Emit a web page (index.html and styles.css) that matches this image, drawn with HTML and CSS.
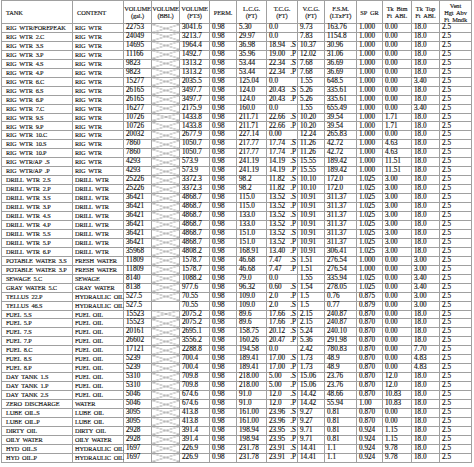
FILE: index.html
```html
<!DOCTYPE html>
<html>
<head>
<meta charset="utf-8">
<link rel="stylesheet" href="styles.css">
</head>
<body>
<table class="grid">
<colgroup>
<col class="c-tank"><col class="c-content"><col class="c-gal"><col class="c-bbl"><col class="c-ft3"><col class="c-perm"><col class="c-lcg"><col class="c-tcg"><col class="c-vcg"><col class="c-fsm"><col class="c-sg"><col class="c-btm"><col class="c-top"><col class="c-vent">
</colgroup>
<thead>
<tr>
<th class="l">TANK</th><th class="l">CONTENT</th><th>VOLUME<br>(gal.)</th><th>VOLUME<br>(BBL)</th><th>VOLUME<br>(FT3)</th><th>PERM.</th><th>L.C.G.<br>(FT)</th><th>T.C.G.<br>(FT)</th><th>V.C.G.<br>(FT)</th><th>F.S.M.<br>(LTxFT)</th><th>SP GR</th><th>Tk Btm<br>Ft ABL</th><th>Tk Top<br>Ft ABL</th><th>Vent<br>Hgt Abv<br>Ft Mndk</th>
</tr>
</thead>
<tbody>
<tr><td>RIG WTR/FOREPEAK</td><td>RIG WTR</td><td>22753</td><td class="x"></td><td>3041.6</td><td>0.98</td><td>5.30</td><td>0.0</td><td>9.73</td><td>163.76</td><td>1.000</td><td>0.00</td><td>18.0</td><td>2.5</td></tr>
<tr><td>RIG WTR 2.C</td><td>RIG WTR</td><td>24049</td><td class="x"></td><td>3213.7</td><td>0.98</td><td>29.97</td><td>0.0</td><td>7.83</td><td>1154.8</td><td>1.000</td><td>0.00</td><td>18.0</td><td>2.5</td></tr>
<tr><td>RIG WTR 3.S</td><td>RIG WTR</td><td>14695</td><td class="x"></td><td>1964.4</td><td>0.98</td><td>36.98</td><td>18.94<span class="sd">.S</span></td><td>10.37</td><td>30.96</td><td>1.000</td><td>0.00</td><td>18.0</td><td>2.5</td></tr>
<tr><td>RIG WTR 3.P</td><td>RIG WTR</td><td>11166</td><td class="x"></td><td>1492.7</td><td>0.98</td><td>35.96</td><td>19.00<span class="sd">.P</span></td><td>12.02</td><td>31.06</td><td>1.000</td><td>0.00</td><td>18.0</td><td>2.5</td></tr>
<tr><td>RIG WTR 4.S</td><td>RIG WTR</td><td>9823</td><td class="x"></td><td>1313.2</td><td>0.98</td><td>53.44</td><td>22.34<span class="sd">.S</span></td><td>7.68</td><td>36.69</td><td>1.000</td><td>0.00</td><td>18.0</td><td>2.5</td></tr>
<tr><td>RIG WTR 4.P</td><td>RIG WTR</td><td>9823</td><td class="x"></td><td>1313.2</td><td>0.98</td><td>53.44</td><td>22.34<span class="sd">.P</span></td><td>7.68</td><td>36.69</td><td>1.000</td><td>0.00</td><td>18.0</td><td>2.5</td></tr>
<tr><td>RIG WTR 6.C</td><td>RIG WTR</td><td>15277</td><td class="x"></td><td>2035.5</td><td>0.98</td><td>125.04</td><td>0.0</td><td>1.55</td><td>648.5</td><td>1.000</td><td>0.00</td><td>3.40</td><td>2.5</td></tr>
<tr><td>RIG WTR 6.S</td><td>RIG WTR</td><td>26165</td><td class="x"></td><td>3497.7</td><td>0.98</td><td>124.0</td><td>20.43<span class="sd">.S</span></td><td>5.26</td><td>335.61</td><td>1.000</td><td>0.00</td><td>18.0</td><td>2.5</td></tr>
<tr><td>RIG WTR 6.P</td><td>RIG WTR</td><td>26165</td><td class="x"></td><td>3497.7</td><td>0.98</td><td>124.0</td><td>20.43<span class="sd">.P</span></td><td>5.26</td><td>335.61</td><td>1.000</td><td>0.00</td><td>18.0</td><td>2.5</td></tr>
<tr><td>RIG WTR 7.C</td><td>RIG WTR</td><td>16277</td><td class="x"></td><td>2175.9</td><td>0.98</td><td>160.0</td><td>0.0</td><td>1.55</td><td>655.49</td><td>1.000</td><td>0.00</td><td>3.40</td><td>2.5</td></tr>
<tr><td>RIG WTR 9.S</td><td>RIG WTR</td><td>10726</td><td class="x"></td><td>1433.8</td><td>0.98</td><td>211.71</td><td>22.66<span class="sd">.S</span></td><td>10.20</td><td>39.54</td><td>1.000</td><td>1.71</td><td>18.0</td><td>2.5</td></tr>
<tr><td>RIG WTR 9.P</td><td>RIG WTR</td><td>10726</td><td class="x"></td><td>1433.8</td><td>0.98</td><td>211.71</td><td>22.66<span class="sd">.P</span></td><td>10.20</td><td>39.54</td><td>1.000</td><td>1.71</td><td>18.0</td><td>2.5</td></tr>
<tr><td>RIG WTR 10.C</td><td>RIG WTR</td><td>20032</td><td class="x"></td><td>2677.9</td><td>0.98</td><td>227.14</td><td>0.00</td><td>12.24</td><td>265.83</td><td>1.000</td><td>0.00</td><td>18.0</td><td>2.5</td></tr>
<tr><td>RIG WTR 10.S</td><td>RIG WTR</td><td>7860</td><td class="x"></td><td>1050.7</td><td>0.98</td><td>217.77</td><td>17.74<span class="sd">.S</span></td><td>11.26</td><td>42.72</td><td>1.000</td><td>4.63</td><td>18.0</td><td>2.5</td></tr>
<tr><td>RIG WTR 10.P</td><td>RIG WTR</td><td>7860</td><td class="x"></td><td>1050.7</td><td>0.98</td><td>217.77</td><td>17.74<span class="sd">.P</span></td><td>11.26</td><td>42.72</td><td>1.000</td><td>4.63</td><td>18.0</td><td>2.5</td></tr>
<tr><td>RIG WTR/AP .S</td><td>RIG WTR</td><td>4293</td><td class="x"></td><td>573.9</td><td>0.98</td><td>241.19</td><td>14.19<span class="sd">.S</span></td><td>15.55</td><td>189.42</td><td>1.000</td><td>11.51</td><td>18.0</td><td>2.5</td></tr>
<tr><td>RIG WTR/AP .P</td><td>RIG WTR</td><td>4293</td><td class="x"></td><td>573.9</td><td>0.98</td><td>241.19</td><td>14.19<span class="sd">.P</span></td><td>15.55</td><td>189.42</td><td>1.000</td><td>11.51</td><td>18.0</td><td>2.5</td></tr>
<tr><td>DRILL WTR 2.S</td><td>DRILL WTR</td><td>25226</td><td class="x"></td><td>3372.3</td><td>0.98</td><td>98.2</td><td>11.82<span class="sd">.S</span></td><td>10.10</td><td>172.0</td><td>1.025</td><td>3.00</td><td>18.0</td><td>2.5</td></tr>
<tr><td>DRILL WTR 2.P</td><td>DRILL WTR</td><td>25226</td><td class="x"></td><td>3372.3</td><td>0.98</td><td>98.2</td><td>11.82<span class="sd">.P</span></td><td>10.10</td><td>172.0</td><td>1.025</td><td>3.00</td><td>18.0</td><td>2.5</td></tr>
<tr><td>DRILL WTR 3.S</td><td>DRILL WTR</td><td>36421</td><td class="x"></td><td>4868.7</td><td>0.98</td><td>115.0</td><td>13.52<span class="sd">.S</span></td><td>10.91</td><td>311.37</td><td>1.025</td><td>3.00</td><td>18.0</td><td>2.5</td></tr>
<tr><td>DRILL WTR 3.P</td><td>DRILL WTR</td><td>36421</td><td class="x"></td><td>4868.7</td><td>0.98</td><td>115.0</td><td>13.52<span class="sd">.P</span></td><td>10.91</td><td>311.37</td><td>1.025</td><td>3.00</td><td>18.0</td><td>2.5</td></tr>
<tr><td>DRILL WTR 4.S</td><td>DRILL WTR</td><td>36421</td><td class="x"></td><td>4868.7</td><td>0.98</td><td>133.0</td><td>13.52<span class="sd">.S</span></td><td>10.91</td><td>311.37</td><td>1.025</td><td>3.00</td><td>18.0</td><td>2.5</td></tr>
<tr><td>DRILL WTR 4.P</td><td>DRILL WTR</td><td>36421</td><td class="x"></td><td>4868.7</td><td>0.98</td><td>133.0</td><td>13.52<span class="sd">.P</span></td><td>10.91</td><td>311.37</td><td>1.025</td><td>3.00</td><td>18.0</td><td>2.5</td></tr>
<tr><td>DRILL WTR 5.S</td><td>DRILL WTR</td><td>36421</td><td class="x"></td><td>4868.7</td><td>0.98</td><td>151.0</td><td>13.52<span class="sd">.S</span></td><td>10.91</td><td>311.37</td><td>1.025</td><td>3.00</td><td>18.0</td><td>2.5</td></tr>
<tr><td>DRILL WTR 5.P</td><td>DRILL WTR</td><td>36421</td><td class="x"></td><td>4868.7</td><td>0.98</td><td>151.0</td><td>13.52<span class="sd">.P</span></td><td>10.91</td><td>311.37</td><td>1.025</td><td>3.00</td><td>18.0</td><td>2.5</td></tr>
<tr><td>DRILL WTR 6.P</td><td>DRILL WTR</td><td>35968</td><td class="x"></td><td>4808.2</td><td>0.98</td><td>168.91</td><td>13.40<span class="sd">.P</span></td><td>10.91</td><td>306.41</td><td>1.025</td><td>3.00</td><td>18.0</td><td>2.5</td></tr>
<tr><td>POTABLE WATER 3.S</td><td>FRESH WATER</td><td>11809</td><td class="x"></td><td>1578.7</td><td>0.98</td><td>46.68</td><td>7.47<span class="sd">.S</span></td><td>1.51</td><td>276.54</td><td>1.000</td><td>0.00</td><td>3.00</td><td>2.5</td></tr>
<tr><td>POTABLE WATER 3.P</td><td>FRESH WATER</td><td>11809</td><td class="x"></td><td>1578.7</td><td>0.98</td><td>46.68</td><td>7.47<span class="sd">.P</span></td><td>1.51</td><td>276.54</td><td>1.000</td><td>0.00</td><td>3.00</td><td>2.5</td></tr>
<tr><td>SEWAGE 5.C</td><td>SEWAGE</td><td>8140</td><td class="x"></td><td>1088.2</td><td>0.98</td><td>79.0</td><td>0.0</td><td>1.55</td><td>335.94</td><td>1.025</td><td>0.00</td><td>3.40</td><td>2.5</td></tr>
<tr><td>GRAY WATER 5.C</td><td>GRAY WATER</td><td>8138</td><td class="x"></td><td>977.6</td><td>0.98</td><td>96.32</td><td>0.60<span class="sd">.S</span></td><td>1.54</td><td>278.05</td><td>1.025</td><td>0.00</td><td>3.40</td><td>2.5</td></tr>
<tr><td>TELLUS 22.P</td><td>HYDRAULIC OIL</td><td>527.5</td><td class="x"></td><td>70.55</td><td>0.98</td><td>109.0</td><td>2.0<span class="sd">.P</span></td><td>1.5</td><td>0.76</td><td>0.875</td><td>0.00</td><td>3.00</td><td>2.5</td></tr>
<tr><td>TELLUS 46.S</td><td>HYDRAULIC OIL</td><td>527.5</td><td></td><td>70.55</td><td>0.98</td><td>109.0</td><td>2.0<span class="sd">.S</span></td><td>1.5</td><td>0.77</td><td>0.879</td><td>0.00</td><td>3.00</td><td>2.5</td></tr>
<tr><td>FUEL 5.S</td><td>FUEL OIL</td><td>15523</td><td class="x"></td><td>2075.2</td><td>0.98</td><td>89.6</td><td>17.66<span class="sd">.S</span></td><td>2.15</td><td>240.87</td><td>0.870</td><td>0.00</td><td>18.0</td><td>2.5</td></tr>
<tr><td>FUEL 5.P</td><td>FUEL OIL</td><td>15523</td><td class="x"></td><td>2075.2</td><td>0.98</td><td>89.6</td><td>17.66<span class="sd">.P</span></td><td>2.15</td><td>240.87</td><td>0.870</td><td>0.00</td><td>18.0</td><td>2.5</td></tr>
<tr><td>FUEL 7.S</td><td>FUEL OIL</td><td>20161</td><td class="x"></td><td>2695.1</td><td>0.98</td><td>158.75</td><td>20.12<span class="sd">.S</span></td><td>5.24</td><td>240.10</td><td>0.870</td><td>0.00</td><td>18.0</td><td>2.5</td></tr>
<tr><td>FUEL 7.P</td><td>FUEL OIL</td><td>26602</td><td class="x"></td><td>3556.2</td><td>0.98</td><td>160.26</td><td>20.47<span class="sd">.P</span></td><td>5.36</td><td>291.98</td><td>0.870</td><td>0.00</td><td>18.0</td><td>2.5</td></tr>
<tr><td>FUEL 8.C</td><td>FUEL OIL</td><td>17121</td><td class="x"></td><td>2288.8</td><td>0.98</td><td>194.58</td><td>0.0</td><td>2.42</td><td>780.83</td><td>0.870</td><td>0.00</td><td>7.70</td><td>2.5</td></tr>
<tr><td>FUEL 8.S</td><td>FUEL OIL</td><td>5239</td><td class="x"></td><td>700.4</td><td>0.98</td><td>189.41</td><td>17.00<span class="sd">.S</span></td><td>1.73</td><td>48.9</td><td>0.870</td><td>0.00</td><td>4.83</td><td>2.5</td></tr>
<tr><td>FUEL 8.P</td><td>FUEL OIL</td><td>5239</td><td class="x"></td><td>700.4</td><td>0.98</td><td>189.41</td><td>17.00<span class="sd">.P</span></td><td>1.73</td><td>48.9</td><td>0.870</td><td>0.00</td><td>4.83</td><td>2.5</td></tr>
<tr><td>DAY TANK 1.S</td><td>FUEL OIL</td><td>5310</td><td class="x"></td><td>709.8</td><td>0.98</td><td>218.00</td><td>5.00<span class="sd">.S</span></td><td>15.06</td><td>23.76</td><td>0.870</td><td>12.0</td><td>18.0</td><td>2.5</td></tr>
<tr><td>DAY TANK 1.P</td><td>FUEL OIL</td><td>5310</td><td class="x"></td><td>709.8</td><td>0.98</td><td>218.00</td><td>5.00<span class="sd">.P</span></td><td>15.06</td><td>23.76</td><td>0.870</td><td>12.0</td><td>18.0</td><td>2.5</td></tr>
<tr><td>DAY TANK 2.S</td><td>FUEL OIL</td><td>5046</td><td class="x"></td><td>674.6</td><td>0.98</td><td>91.0</td><td>12.0<span class="sd">.S</span></td><td>14.42</td><td>48.66</td><td>0.870</td><td>10.83</td><td>18.0</td><td>2.5</td></tr>
<tr><td>ZERO DISCHARGE</td><td>WATER</td><td>5046</td><td class="x"></td><td>674.6</td><td>0.98</td><td>91.0</td><td>12.0<span class="sd">.P</span></td><td>14.42</td><td>55.94</td><td>1.00</td><td>10.83</td><td>18.0</td><td>2.5</td></tr>
<tr><td>LUBE OIL.S</td><td>LUBE OIL</td><td>3095</td><td class="x"></td><td>413.8</td><td>0.98</td><td>161.00</td><td>23.96<span class="sd">.S</span></td><td>9.27</td><td>0.81</td><td>0.870</td><td>0.00</td><td>18.0</td><td>2.5</td></tr>
<tr><td>LUBE OIL.P</td><td>LUBE OIL</td><td>3095</td><td class="x"></td><td>413.8</td><td>0.98</td><td>161.00</td><td>23.96<span class="sd">.P</span></td><td>9.27</td><td>0.81</td><td>0.870</td><td>0.00</td><td>18.0</td><td>2.5</td></tr>
<tr><td>DIRTY OIL</td><td>DIRTY OIL</td><td>2928</td><td class="x"></td><td>391.4</td><td>0.98</td><td>198.94</td><td>23.95<span class="sd">.S</span></td><td>9.71</td><td>0.81</td><td>0.924</td><td>1.15</td><td>18.0</td><td>2.5</td></tr>
<tr><td>OILY WATER</td><td>OILY WATER</td><td>2928</td><td class="x"></td><td>391.4</td><td>0.98</td><td>198.94</td><td>23.95<span class="sd">.P</span></td><td>9.71</td><td>0.81</td><td>0.924</td><td>1.15</td><td>18.0</td><td>2.5</td></tr>
<tr><td>HYD OIL.S</td><td>HYDRAULIC OIL</td><td>1697</td><td class="x"></td><td>226.9</td><td>0.98</td><td>231.78</td><td>23.91<span class="sd">.S</span></td><td>14.41</td><td>1.1</td><td>0.924</td><td>9.78</td><td>18.0</td><td>2.5</td></tr>
<tr><td>HYD OIL.P</td><td>HYDRAULIC OIL</td><td>1697</td><td class="x"></td><td>226.9</td><td>0.98</td><td>231.78</td><td>23.91<span class="sd">.P</span></td><td>14.41</td><td>1.1</td><td>0.924</td><td>9.78</td><td>18.0</td><td>2.5</td></tr>
</tbody>
</table>
</body>
</html>
```

FILE: styles.css
```css
html, body {
  margin: 0;
  padding: 0;
  background: #ffffff;
}

.grid {
  border-collapse: collapse;
  table-layout: fixed;
  width: 470px;
  margin-left: 1px;
  font-family: "Liberation Serif", "Times New Roman", serif;
  color: #111111;
  -webkit-text-stroke: 0.15px #222222;
}

.c-tank { width: 71px; }
.c-content { width: 51px; }
.c-gal { width: 28px; }
.c-bbl { width: 28px; }
.c-ft3 { width: 30px; }
.c-perm { width: 27px; }
.c-lcg { width: 30px; }
.c-tcg { width: 31px; }
.c-vcg { width: 27px; }
.c-fsm { width: 32px; }
.c-sg { width: 26px; }
.c-btm { width: 29px; }
.c-top { width: 28px; }
.c-vent { width: 32px; }

.grid th,
.grid td {
  border: 1px solid #a0a0a0;
  white-space: nowrap;
}

.grid thead tr {
  height: 23px;
}

.grid th {
  font-weight: normal;
  font-size: 6.4px;
  line-height: 7px;
  text-align: center;
  vertical-align: middle;
  padding: 0;
  word-spacing: 1.5px;
  letter-spacing: -0.1px;
}

.grid th.l {
  text-align: left;
  padding-left: 4px;
}

.grid tbody tr {
  height: 8.96px;
}

.grid td {
  font-size: 7.2px;
  line-height: 7.9px;
  padding: 0 1px 0 2px;
  vertical-align: middle;
}

.grid td:nth-child(-n+2) {
  font-size: 6.3px;
  letter-spacing: -0.15px;
  word-spacing: 1.5px;
}

.grid td:first-child {
  padding-left: 4px;
}

.grid td.x {
  background:
    linear-gradient(to top right, transparent calc(50% - 0.6px), #8c8c8c 50%, transparent calc(50% + 0.6px)),
    linear-gradient(to bottom right, transparent calc(50% - 0.6px), #8c8c8c 50%, transparent calc(50% + 0.6px));
}

.sd {
  float: right;
}
```
